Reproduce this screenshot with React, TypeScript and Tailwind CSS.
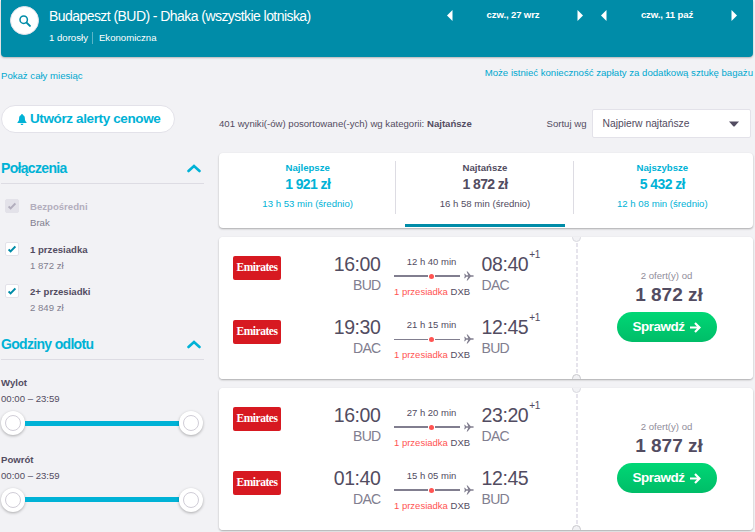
import { clsx } from 'clsx'

type Leg = {
  depart: string
  from: string
  arrive: string
  to: string
  nextDay?: boolean
  duration: string
  thin?: boolean
}

type Offer = {
  price: string
  legs: Leg[]
}

const sortTabs = [
  { name: 'Najlepsze', price: '1 921 zł', average: '13 h 53 min (średnio)' },
  { name: 'Najtańsze', price: '1 872 zł', average: '16 h 58 min (średnio)', active: true },
  { name: 'Najszybsze', price: '5 432 zł', average: '12 h 08 min (średnio)' },
]

const offers: Offer[] = [
  {
    price: '1 872 zł',
    legs: [
      { depart: '16:00', from: 'BUD', arrive: '08:40', to: 'DAC', nextDay: true, duration: '12 h 40 min' },
      { depart: '19:30', from: 'DAC', arrive: '12:45', to: 'BUD', nextDay: true, duration: '21 h 15 min', thin: true },
    ],
  },
  {
    price: '1 877 zł',
    legs: [
      { depart: '16:00', from: 'BUD', arrive: '23:20', to: 'DAC', nextDay: true, duration: '27 h 20 min' },
      { depart: '01:40', from: 'DAC', arrive: '12:45', to: 'BUD', duration: '15 h 05 min' },
    ],
  },
]

function Triangle({ left }: { left?: boolean }) {
  return (
    <svg className="h-[11px] w-[6px] shrink-0" viewBox="0 0 6 11" fill="#fff">
      <path d={left ? 'M5.500 0v11L0 5.500z' : 'M.5 0v11L6 5.500z'} />
    </svg>
  )
}

function DateStepper({ date }: { date: string }) {
  return (
    <div className="flex w-[136px] items-center justify-between text-[9.6px] leading-[12px] font-bold tracking-[-0.15px]">
      <Triangle left />
      <span className="pr-[4px]">{date}</span>
      <Triangle />
    </div>
  )
}

function SearchHeader() {
  return (
    <header className="mr-[2px] ml-px flex h-[57px] rounded-b-[4px] bg-[#008ca8] text-white shadow-[0_1px_2px_rgba(0,0,0,0.25)]">
      <div className="mt-[6px] ml-[9px] flex size-[29px] shrink-0 items-center justify-center rounded-full border border-[#e6e4ec] bg-white">
        <svg className="size-[12px]" viewBox="0 0 12 12" fill="none" stroke="#008ca8">
          <circle cx="4.7" cy="4.7" r="3.7" strokeWidth="1.5" />
          <path d="M7.600 7.600l3.300 3.300" strokeWidth="2" strokeLinecap="round" />
        </svg>
      </div>
      <div className="mt-[8px] ml-[10px] flex-1 whitespace-nowrap">
        <h1 className="text-[14px] leading-[16px] tracking-[-0.56px]">Budapeszt (BUD) - Dhaka (wszystkie lotniska)</h1>
        <div className="mt-[8px] flex text-[9.6px] leading-[12px]">
          <span className="border-r border-[#5cb5c7] pr-[4px]">1 dorosły</span>
          <span className="pl-[6px]">Ekonomiczna</span>
        </div>
      </div>
      <div className="mt-[9px] mr-[16px] flex h-[12px] gap-[18px]">
        <DateStepper date="czw., 27 wrz" />
        <DateStepper date="czw., 11 paź" />
      </div>
    </header>
  )
}

function SectionTitle({ children }: { children: string }) {
  return (
    <div className="flex h-[26px] items-start justify-between border-b border-[#dddce3] pr-[3px]">
      <h2 className="pt-px text-[14px] leading-[18px] font-bold tracking-[-0.68px] text-[#00b2d6]">{children}</h2>
      <svg className="mt-[6px] h-[9px] w-[14px]" viewBox="0 0 14 9" fill="none" stroke="#00b2d6" strokeWidth="2.600">
        <path d="M1.500 7L7 2l5.500 5" strokeLinecap="round" />
      </svg>
    </div>
  )
}

function StopOption({ label, price, disabled }: { label: string; price: string; disabled?: boolean }) {
  return (
    <div className="flex h-[42.5px] gap-[10px] pl-[4px]">
      <div
        className={clsx(
          'flex size-[14px] items-center justify-center rounded-[2px] border border-[#e3e2e9]',
          disabled ? 'bg-[#e3e2e9]' : 'bg-white',
        )}
      >
        <svg className="size-[8px]" viewBox="0 0 8 8" fill="none" stroke={disabled ? '#b2aebd' : '#008ca8'} strokeWidth="2">
          <path d="M0.6 4.400l2 2L7.400 1.400" />
        </svg>
      </div>
      <div className="pt-px pl-[1px] text-[9.6px] leading-[13px]">
        <div className={clsx('font-bold', disabled ? 'text-[#b2aebd]' : 'text-[#524c61]')}>{label}</div>
        <div className="mt-[3px] text-[#817e8f]">{price}</div>
      </div>
    </div>
  )
}

function Knob() {
  return (
    <div className="flex size-[24px] items-center justify-center rounded-full bg-white shadow-[0_1px_3px_rgba(0,0,0,0.3)]">
      <div className="size-[16px] rounded-full border border-[#d0cdd7]" />
    </div>
  )
}

function TimeRange({ label }: { label: string }) {
  return (
    <div className="h-[76.5px] text-[9.6px] leading-[12px] text-[#524c61]">
      <div className="font-bold">{label}</div>
      <div className="mt-[4px]">00:00 – 23:59</div>
      <div className="mt-[6px] flex items-center">
        <Knob />
        <div className="h-[5px] w-[154px] bg-[#00b2d6]" />
        <Knob />
      </div>
    </div>
  )
}

function Sidebar() {
  return (
    <aside className="ml-px w-[203px] shrink-0">
      <button className="flex h-[28px] w-[173.5px] items-center gap-[3px] rounded-full border border-[#e3e2e9] bg-white pl-[15px] text-[13.5px] font-bold tracking-[-0.38px] whitespace-nowrap text-[#00b2d6]">
        <svg className="h-[11px] w-[10px]" viewBox="0 0 9 11" fill="#00b2d6">
          <path d="M3.800 0h1.400v1C6.900 1.400 7.400 2.800 7.400 4.500c0 2 .5 2.800 1.600 3.700v.8H0v-.8c1.100-.9 1.600-1.700 1.600-3.700C1.600 2.800 2.100 1.400 3.800 1zM3 9.700h3C5.800 10.500 5.200 11 4.500 11S3.200 10.500 3 9.700z" />
        </svg>
        Utwórz alerty cenowe
      </button>
      <div className="mt-[25px]">
        <SectionTitle>Połączenia</SectionTitle>
      </div>
      <div className="mt-[15px] h-[135px]">
        <StopOption label="Bezpośredni" price="Brak" disabled />
        <StopOption label="1 przesiadka" price="1 872 zł" />
        <StopOption label="2+ przesiadki" price="2 849 zł" />
      </div>
      <SectionTitle>Godziny odlotu</SectionTitle>
      <div className="mt-[17px]">
        <TimeRange label="Wylot" />
        <TimeRange label="Powrót" />
      </div>
    </aside>
  )
}

function SortTabs() {
  return (
    <div className="flex h-[75px] rounded-[4px] bg-white pr-[2px] shadow-[0_1px_2px_rgba(0,0,0,0.3)]">
      {sortTabs.map((tab, i) => (
        <div key={tab.name} className="flex flex-1">
          {i > 0 && <div className="mt-[8px] -ml-px h-[53px] w-px bg-[#dddce3]" />}
          <div
            className={clsx(
              'mx-[9px] mb-px flex flex-1 flex-col items-center pt-[8px] whitespace-nowrap',
              tab.active ? 'border-b-[3px] border-[#008ca8] text-[#524c61]' : 'text-[#00b2d6]',
            )}
          >
            <span className="text-[9.6px] leading-[14px] font-bold">{tab.name}</span>
            <span className="mt-px text-[14px] leading-[17px] font-bold tracking-[-0.6px]">{tab.price}</span>
            <span className="mt-[5px] text-[9.6px] leading-[12px]">{tab.average}</span>
          </div>
        </div>
      ))}
    </div>
  )
}

function PlaneIcon() {
  return (
    <svg className="ml-[4px] h-[10px] w-[10px] shrink-0" viewBox="0 0 10 10" fill="#817e8f">
      <path d="M2.600.6h1L6.700 4.300h2c.8 0 1.200.3 1.200.7s-.4.7-1.200.7h-2L3.600 9.400h-1L4.300 5.700H2.200L1 7.300H.2L.8 5 .2 2.700H1l1.200 1.600h2.100z" />
    </svg>
  )
}

function FlightLeg({ leg }: { leg: Leg }) {
  return (
    <div className="group flex h-[63px] whitespace-nowrap text-[#524c61]">
      <div className="mt-[3px] flex h-[24px] w-[48px] items-center justify-center rounded-[2px] bg-[#d71921] font-['Liberation_Serif',serif] text-[11.5px] font-bold tracking-[-0.45px] text-white group-last:mt-[4px]">
        Emirates
      </div>
      <div className="w-[99.5px] text-right">
        <div className="text-[19.5px] leading-[22px] tracking-[-0.4px]">{leg.depart}</div>
        <div className="text-[14px] leading-[21px] tracking-[-0.7px] text-[#817e8f]">{leg.from}</div>
      </div>
      <div className="ml-[13.5px] w-[80px] text-[9.5px] leading-[12px]">
        <div className="mt-[3px] w-[75px] text-center">{leg.duration}</div>
        <div className="mt-[3px] flex h-[10px] items-center">
          <div className={clsx('w-[34px] bg-[#817e8f]', leg.thin ? 'h-px' : 'h-[2px]')} />
          <div className="mx-px size-[5px] rounded-full bg-[#ff5452]" />
          <div className={clsx('w-[25px] bg-[#817e8f]', leg.thin ? 'h-px' : 'h-[2px]')} />
          <PlaneIcon />
        </div>
        <div className="mt-[5px]">
          <span className="text-[#ff5452]">1 przesiadka</span> DXB
        </div>
      </div>
      <div className="ml-[7.5px]">
        <div className="flex text-[19.5px] leading-[22px] tracking-[-0.4px]">
          {leg.arrive}
          {leg.nextDay && <sup className="-mt-[4px] ml-px text-[10px] leading-[12px] [top:0]">+1</sup>}
        </div>
        <div className="text-[14px] leading-[21px] tracking-[-0.7px] text-[#817e8f]">{leg.to}</div>
      </div>
    </div>
  )
}

function OfferCard({ offer }: { offer: Offer }) {
  return (
    <article className="relative flex h-[142px] overflow-hidden rounded-[4px] bg-white">
      <div className="w-[357px] pt-[16px] pl-[14px]">
        {offer.legs.map((leg) => (
          <FlightLeg key={leg.from} leg={leg} />
        ))}
      </div>
      <div className="w-[2px] bg-[repeating-linear-gradient(to_bottom,#e6e4ec_0_4px,transparent_4px_6px)]" />
      <div className="flex flex-1 flex-col items-center pt-[33px] pl-[2px] whitespace-nowrap">
        <span className="text-[9.6px] leading-[12px] text-[#918e9b]">2 ofert(y) od</span>
        <span className="mt-[2px] pl-[5px] text-[19px] leading-[22px] font-bold text-[#524c61]">{offer.price}</span>
        <button className="mt-[6px] flex h-[30px] w-[100px] items-center justify-center gap-[5px] rounded-full bg-linear-to-b from-[#00d775] to-[#00bd68] text-[13.5px] font-bold tracking-[-0.5px] text-white">
          Sprawdź
          <svg className="h-[11px] w-[11px]" viewBox="0 0 11 11" fill="none" stroke="#fff" strokeWidth="2.200">
            <path d="M0 5.500h9.500M5 1l4.500 4.500L5 10" />
          </svg>
        </button>
      </div>
      <div className="absolute -top-[4px] left-[353px] size-[9px] rounded-full border border-[#d9d8de] bg-[#f2f2f5]" />
      <div className="absolute -bottom-[4px] left-[353px] size-[9px] rounded-full border border-[#c8c8cc] bg-[#f2f2f5]" />
    </article>
  )
}

function Results() {
  return (
    <main className="ml-[15px] w-[534px]">
      <div className="mt-[4px] flex h-[29px] items-center text-[9.6px] whitespace-nowrap text-[#524c61]">
        <p className="pt-px">
          401 wyniki(-ów) posortowane(-ych) wg kategorii: <b>Najtańsze</b>
        </p>
        <span className="mr-[5px] ml-auto pt-px">Sortuj wg</span>
        <div className="mr-[2px] flex h-[29px] w-[159.5px] items-center justify-between rounded-[2px] border border-[#e3e2e9] bg-white pr-[11px] pl-[10px] text-[10.3px]">
          Najpierw najtańsze
          <svg className="h-[6px] w-[10px]" viewBox="0 0 10 6" fill="#524c61">
            <path d="M0 .5h10L5.500 5.500h-1z" />
          </svg>
        </div>
      </div>
      <div className="mt-[15px] flex flex-col gap-[9px]">
        <SortTabs />
        {offers.map((offer) => (
          <div key={offer.price} className="rounded-[4px] shadow-[0_1px_2px_rgba(0,0,0,0.3)]">
            <OfferCard offer={offer} />
          </div>
        ))}
      </div>
    </main>
  )
}

export default function App() {
  return (
    <div className="h-[532px] w-[755px] overflow-hidden bg-[#f2f2f5] font-['Liberation_Sans',Arial,sans-serif]">
      <SearchHeader />
      <div className="flex h-[48px] justify-between pr-[2px] pl-px text-[9.6px] leading-[12px] text-[#00a8cf]">
        <span className="mt-[13px]">Pokaż cały miesiąc</span>
        <span className="mt-[10px]">Może istnieć konieczność zapłaty za dodatkową sztukę bagażu</span>
      </div>
      <div className="flex">
        <Sidebar />
        <Results />
      </div>
    </div>
  )
}
